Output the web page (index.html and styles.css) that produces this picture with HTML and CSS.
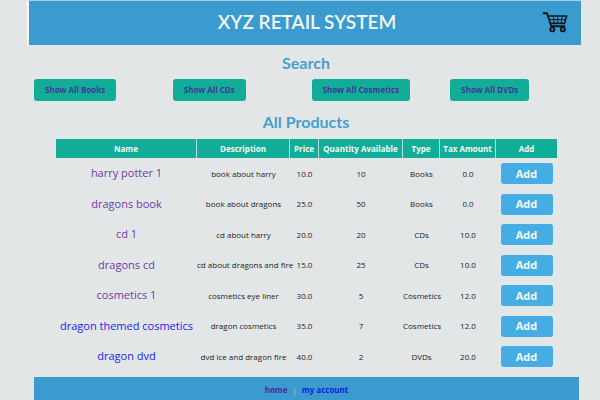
FILE: index.html
```html
<!DOCTYPE html>
<html lang="en">
<head>
<meta charset="utf-8">
<title>XYZ Retail System</title>
<link rel="stylesheet" href="styles.css">
</head>
<body>
<header class="banner">
  <h1 class="brand">XYZ RETAIL SYSTEM</h1>
  <a class="cart" href="#cart" aria-label="Cart">
    <svg viewBox="0 0 26 22" width="26" height="22" fill="none" stroke="#0b1820" stroke-linecap="round" stroke-linejoin="round">
      <path d="M1.5 2.2H5L9.3 15.2H22.5" stroke-width="1.9"/>
      <path d="M6 5H24.5L22.6 12.4H8.4" stroke-width="1.6"/>
      <path d="M7.2 8.6H23.4M11.3 5L12.2 12M15.6 5V12M20.2 5L19.2 12" stroke-width="1"/>
      <circle cx="10.3" cy="18.4" r="2" stroke-width="1.9"/>
      <circle cx="20.8" cy="18.4" r="2" stroke-width="1.9"/>
    </svg>
  </a>
</header>
<main>
  <h2 class="heading">Search</h2>
  <nav class="filters">
    <div><a class="filter" href="#books">Show All Books</a></div>
    <div><a class="filter" href="#cds">Show All CDs</a></div>
    <div><a class="filter" href="#cosmetics">Show All Cosmetics</a></div>
    <div><a class="filter" href="#dvds">Show All DVDs</a></div>
  </nav>
  <h2 class="heading">All Products</h2>
  <div class="products">
    <table>
      <colgroup><col><col class="c-desc"><col class="c-price"><col class="c-qty"><col class="c-type"><col class="c-tax"><col class="c-add"></colgroup>
      <thead>
        <tr><th>Name</th><th>Description</th><th>Price</th><th>Quantity Available</th><th>Type</th><th>Tax Amount</th><th>Add</th></tr>
      </thead>
      <tbody>
        <tr><td><a class="name visited" href="#p1">harry potter 1</a></td><td>book about harry</td><td>10.0</td><td>10</td><td>Books</td><td>0.0</td><td><button class="add">Add</button></td></tr>
        <tr><td><a class="name visited" href="#p2">dragons book</a></td><td>book about dragons</td><td>25.0</td><td>50</td><td>Books</td><td>0.0</td><td><button class="add">Add</button></td></tr>
        <tr><td><a class="name visited" href="#p3">cd 1</a></td><td>cd about harry</td><td>20.0</td><td>20</td><td>CDs</td><td>10.0</td><td><button class="add">Add</button></td></tr>
        <tr><td><a class="name visited" href="#p4">dragons cd</a></td><td>cd about dragons and fire</td><td>15.0</td><td>25</td><td>CDs</td><td>10.0</td><td><button class="add">Add</button></td></tr>
        <tr><td><a class="name visited" href="#p5">cosmetics 1</a></td><td>cosmetics eye liner</td><td>30.0</td><td>5</td><td>Cosmetics</td><td>12.0</td><td><button class="add">Add</button></td></tr>
        <tr><td><a class="name" href="#p6">dragon themed cosmetics</a></td><td>dragon cosmetics</td><td>35.0</td><td>7</td><td>Cosmetics</td><td>12.0</td><td><button class="add">Add</button></td></tr>
        <tr><td><a class="name" href="#p7">dragon dvd</a></td><td>dvd ice and dragon fire</td><td>40.0</td><td>2</td><td>DVDs</td><td>20.0</td><td><button class="add">Add</button></td></tr>
      </tbody>
    </table>
  </div>
</main>
<footer class="footer">
  <a class="home" href="#home">home</a><span class="bar">|</span><a class="account" href="#account">my account</a>
</footer>
</body>
</html>
```
FILE: styles.css
```css
* { box-sizing: border-box; }
html { background: #e2e6e7; overflow: hidden; }
body {
  margin: 0;
  color: #222;
  font: 8px/12px "Trebuchet MS", "Open Sans", "Noto Sans", sans-serif;
}
a { text-decoration: none; }
.banner {
  display: grid;
  grid-template-columns: 1fr auto 1fr;
  align-items: center;
  height: 45px;
  margin: 0 19px 0 27px;
  padding: 0 13px 2px 17px;
  background: #3c9bce;
  border-top: 1px solid #a9cfe1;
  border-left: 2px solid #f6f9fa;
}
.brand {
  grid-column: 2;
  margin: 0;
  color: #f4f8fa;
  font-family: "Trebuchet MS", Lato, "Open Sans", sans-serif;
  font-size: 19px;
  line-height: 24px;
  font-weight: 600;
}
.cart { justify-self: end; height: 22px; }
.cart svg { display: block; }
.heading {
  margin: 0;
  padding-left: 12px;
  color: #469fd0;
  text-align: center;
  font-family: "Trebuchet MS", Lato, "Open Sans", sans-serif;
  font-size: 16px;
  line-height: 20px;
  font-weight: 700;
}
main { padding-top: 8px; }
.filters {
  display: grid;
  grid-template-columns: repeat(4, 1fr);
  margin: 6px 11px 11px 34px;
}
.filter {
  display: inline-block;
  padding: 5px 11px;
  border-radius: 3px;
  background: #12ad98;
  color: #45349b;
  font-weight: 700;
}
.products { padding: 7px 43px 5px 56px; }
table {
  width: 100%;
  table-layout: fixed;
  border-collapse: separate;
  border-spacing: 0;
  text-align: center;
}
.c-desc { width: 93px; }
.c-price { width: 29px; }
.c-qty { width: 84px; }
.c-type { width: 37px; }
.c-tax { width: 56px; }
.c-add { width: 61px; }
th, td { padding: 0; white-space: nowrap; }
th {
  height: 19px;
  background: #12ad98;
  border-right: 1px solid #b5dfda;
  color: #f4fbfa;
  font-weight: 700;
}
th:last-child { border-right: 0; }
tbody tr { height: 30px; }
tbody tr:nth-child(odd) { height: 31px; }
.name { color: #1c1cf0; font-size: 11px; }
.visited { color: #6f3aa6; }
.add {
  display: block;
  width: 52px;
  height: 21px;
  margin: 0 auto;
  padding: 0;
  border: 0;
  border-radius: 3px;
  background: #45ade4;
  color: #f4fafd;
  font: 700 11px/20px "Trebuchet MS", "Open Sans", "Noto Sans", sans-serif;
}
.footer {
  display: flex;
  justify-content: center;
  gap: 5px;
  margin: 0 21px 0 34px;
  padding: 7px 0 12px;
  background: #3c9bce;
  font-weight: 700;
}
.home { color: #4b2a9b; }
.bar { color: #a8d0e6; font-weight: 400; }
.account { color: #0a1ee8; }
```
